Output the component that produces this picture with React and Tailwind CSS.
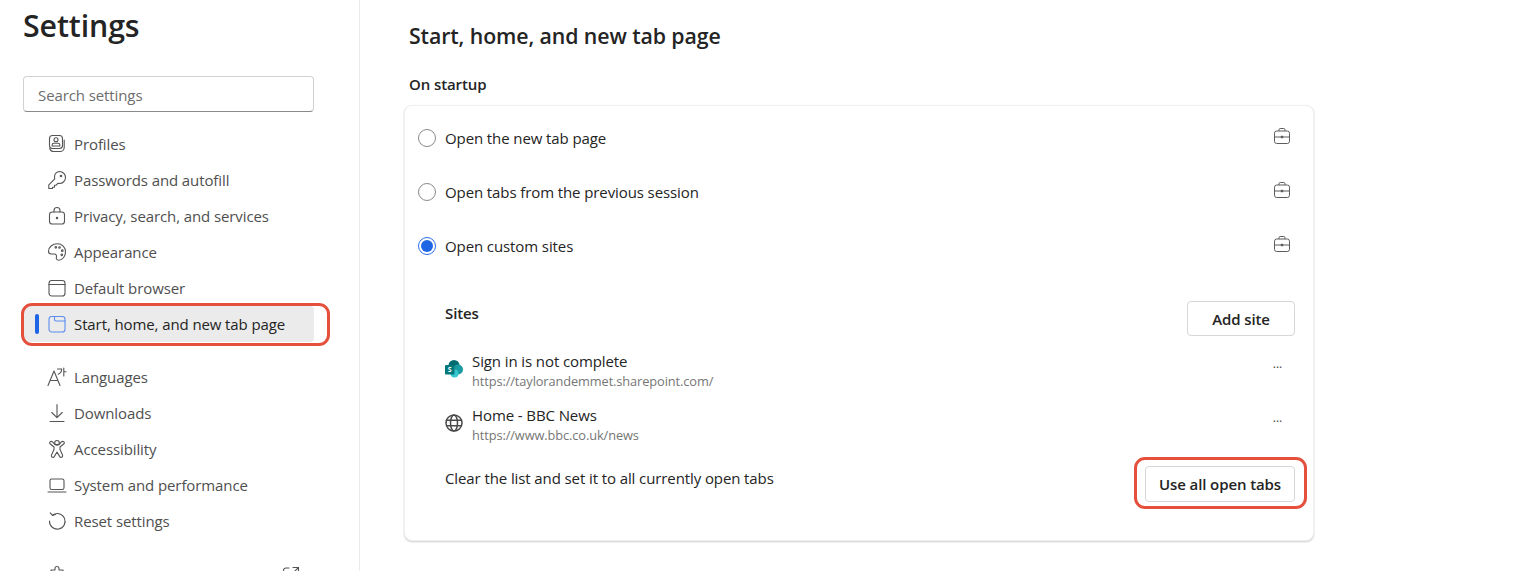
import React from 'react';

const Icon = ({ children, className = 'text-[#555555]' }) => (
  <svg viewBox="0 0 20 20" fill="none" stroke="currentColor" strokeWidth="1.1" strokeLinecap="round" strokeLinejoin="round" className={`h-5 w-5 shrink-0 ${className}`}>
    {children}
  </svg>
);

const icons = {
  profile: (
    <>
      <rect x="2.500" y="1.500" width="13" height="13" rx="3" />
      <path d="M2.800 14.500c.5 1.700 1.800 3 3.700 3h6.500c2.300 0 4.200-1.800 4.200-4.100V6" />
      <circle cx="9" cy="5.800" r="2" />
      <path d="M5.200 12v-1.200c0-1 .8-1.600 1.600-1.600h4.400c.8 0 1.600.6 1.600 1.600V12z" />
    </>
  ),
  key: (
    <>
      <path d="M12.500 1.500a6 6 0 0 1 0 12c-.6 0-1.100-.1-1.700-.2l-1.600 1.900H7.500v2H5.500v1.300H1.800v-3.600l6-6c-.2-.6-.3-1.100-.3-1.900a5.300 5.300 0 0 1 5-5.500z" />
      <circle cx="14" cy="6" r=".8" />
    </>
  ),
  lock: (
    <>
      <rect x="2.500" y="6" width="15" height="12" rx="2.800" />
      <path d="M7 6V4.500a3 3 0 0 1 6 0V6" />
      <circle cx="10" cy="12" r=".7" fill="currentColor" />
    </>
  ),
  palette: (
    <>
      <path d="M10.500 1.800c4.500 0 8 3.400 8 8 0 4.700-3.300 8.400-6.700 8.400-2.100 0-2.800-1.400-2.400-3 .4-1.700-.3-3.200-2.100-3.200H4.300C2.600 12 1.500 10.900 1.500 9.300c0-4.200 4-7.500 9-7.500z" />
      <circle cx="12.500" cy="5.500" r=".8" />
      <circle cx="15.300" cy="8.700" r=".8" />
      <circle cx="14.800" cy="12.800" r=".8" />
      <circle cx="8.800" cy="5.300" r=".8" />
    </>
  ),
  browser: (
    <>
      <rect x="2" y="2.500" width="16" height="15.500" rx="2.800" />
      <path d="M2 6.500h16" />
    </>
  ),
  tab: (
    <>
      <rect x="2" y="2.500" width="16" height="15.500" rx="2.800" />
      <path d="M7.500 2.500v3c0 1 .6 1.500 1.500 1.500h9" />
    </>
  ),
  download: <path d="M10 1.500v13M4.800 9.500l5.200 5.200 5.200-5.200M3 18.500h14" />,
  access: (
    <>
      <circle cx="10" cy="3.800" r="2.300" />
      <path d="M3.600 2.500c-1 .6-1.300 1.600-.5 2.300L7 8v2.500L4.500 16c-.4 1 .1 2 1 2.300.9.300 1.500-.1 1.900-.9L10 13l2.600 4.400c.4.800 1 1.200 1.900.9.900-.3 1.400-1.300 1-2.300L13 10.500V8l3.900-3.200c.8-.7.500-1.700-.5-2.300-.6-.3-1.200-.2-1.700.2L12 5.500H8L5.300 2.700c-.5-.4-1.100-.5-1.700-.2z" />
    </>
  ),
  laptop: (
    <>
      <rect x="3" y="4" width="14" height="10.500" rx="1.800" />
      <path d="M1 17h18" />
    </>
  ),
  reset: (
    <>
      <path d="M5.500 4.200A7.800 7.800 0 1 1 2.500 10" />
      <path d="M3.200 1.800l2.300 2.600 2.900-1" />
    </>
  ),
  extensions: <path d="M8 3.500a2 2 0 0 1 4 0V5h4v4h-1.500a2 2 0 0 0 0 4H16v4H4v-4h1.500a2 2 0 0 0 0-4H4V5h4z" />,
  external: (
    <>
      <path d="M8 3H5a2.500 2.500 0 0 0-2.500 2.500v9.500A2.500 2.500 0 0 0 5 17.500h9.500A2.500 2.500 0 0 0 17 15v-3" />
      <path d="M12 2.500h5.500V8M17.500 2.500L9.500 10.500" />
    </>
  ),
};

const Languages = () => (
  <Icon>
    <path d="M1 18.500L7 4 13 18.500M3 13.500h8" />
    <path d="M10.500 2h4.200c0 2.500-1.300 4.300-3.500 5.300M16.800 1v8M16.800 4.800h2.200" />
  </Icon>
);

const NavItem = ({ icon, label, trailing }) => (
  <div className="flex h-9 items-center gap-[7px] pl-[24px] pr-[13px] text-[#4f4f4f]">
    {icon}
    <span>{label}</span>
    {trailing && <span className="ml-auto">{trailing}</span>}
  </div>
);

const Radio = ({ checked }) =>
  checked ? (
    <span className="flex h-[18px] w-[18px] items-center justify-center rounded-full border border-[#2b6de8]">
      <span className="h-3 w-3 rounded-full bg-[#1f66e5]" />
    </span>
  ) : (
    <span className="h-[18px] w-[18px] rounded-full border border-[#8a8a8a]" />
  );

const Briefcase = () => (
  <svg viewBox="0 0 18 18" fill="none" stroke="currentColor" strokeWidth="1" className="mb-[5px] h-[18px] w-[18px] text-[#5c5c5c]">
    <rect x="1.500" y="4" width="15" height="12.500" rx="2.200" />
    <path d="M6 4V2.700C6 2 6.500 1.500 7.200 1.500h3.600c.7 0 1.200.5 1.200 1.200V4M1.500 10h15" />
    <rect x="7.800" y="8.800" width="2.400" height="2.400" fill="currentColor" stroke="none" />
  </svg>
);

const StartupRow = ({ label, checked }) => (
  <div className="flex h-[54px] items-center pl-[13px] pr-[22px]">
    <Radio checked={checked} />
    <span className="ml-[9px] flex-1 text-[#242424]">{label}</span>
    <Briefcase />
  </div>
);

const SharePoint = () => (
  <svg viewBox="0 0 18 18" className="h-[18px] w-[18px]">
    <circle cx="9" cy="5.500" r="5.500" fill="#036c70" />
    <circle cx="13" cy="9.500" r="5" fill="#1a9ba1" />
    <circle cx="9.500" cy="13.500" r="4" fill="#37c6d0" />
    <rect x="0" y="5" width="9.500" height="9.500" rx="1" fill="#03787c" />
    <text x="4.750" y="12.300" textAnchor="middle" fontSize="7" fontWeight="700" fill="#fff" fontFamily="Open Sans, sans-serif">S</text>
  </svg>
);

const Globe = () => (
  <svg viewBox="0 0 18 18" fill="none" stroke="#4a4a4a" strokeWidth="1.500" className="h-[18px] w-[18px]">
    <circle cx="9" cy="9" r="8" />
    <ellipse cx="9" cy="9" rx="3.500" ry="8" />
    <path d="M1.500 6.300h15M1.500 11.700h15" />
  </svg>
);

const SiteRow = ({ icon, name, url }) => (
  <div className="flex h-[54px] items-start">
    <div className="mt-[9px] w-[27px] shrink-0">{icon}</div>
    <div className="flex-1">
      <div className="h-[20px] leading-[20px] text-[#242424]">{name}</div>
      <div className="text-[12.800px] leading-[20px] text-[#767676]">{url}</div>
    </div>
    <span className="mr-[13px] mt-[3px] text-[12px] leading-[20px] text-[#424242]">...</span>
  </div>
);

const Button = ({ children, className = '' }) => (
  <button className={`flex items-center justify-center rounded border border-[#d6d6d6] bg-white font-semibold text-[#242424] ${className}`}>
    {children}
  </button>
);

export default function App() {
  return (
    <div className="flex h-[571px] overflow-hidden bg-white font-['Open_Sans',sans-serif] text-[15px] tracking-[-0.1px]">
      <aside className="w-[360px] shrink-0 border-r border-[#ebebeb] pl-[23px] pr-[45px]">
        <h1 className="mt-[6px] text-[30.300px] font-semibold leading-[40px] text-[#242424]">Settings</h1>
        <div className="mt-[30px] flex h-9 items-center rounded border border-[#d1d1d1] border-b-[#8a8a8a] px-[14px] pt-[2px] text-[#6e6e6e]">Search settings</div>
        <nav className="mt-[14px]">
          <NavItem icon={<Icon>{icons.profile}</Icon>} label="Profiles" />
          <NavItem icon={<Icon>{icons.key}</Icon>} label="Passwords and autofill" />
          <NavItem icon={<Icon>{icons.lock}</Icon>} label="Privacy, search, and services" />
          <NavItem icon={<Icon>{icons.palette}</Icon>} label="Appearance" />
          <NavItem icon={<Icon>{icons.browser}</Icon>} label="Default browser" />
          <div className="relative flex h-9 items-center gap-[7px] rounded-sm bg-[#ebebeb] pl-[24px] text-[#242424]">
            <span className="absolute left-[12px] top-[8px] h-5 w-[4px] rounded-full bg-[#1f66e5]" />
            <Icon className="text-[#5b8def]">{icons.tab}</Icon>
            <span>Start, home, and new tab page</span>
            <span className="absolute -left-[2px] -top-[3px] h-[43px] w-[309px] rounded-[11px] border-[3px] border-[#e5503c]" />
          </div>
          <div className="mt-[17px]">
            <NavItem icon={<Languages />} label="Languages" />
            <NavItem icon={<Icon>{icons.download}</Icon>} label="Downloads" />
            <NavItem icon={<Icon>{icons.access}</Icon>} label="Accessibility" />
            <NavItem icon={<Icon>{icons.laptop}</Icon>} label="System and performance" />
            <NavItem icon={<Icon>{icons.reset}</Icon>} label="Reset settings" />
          </div>
          <div className="mt-[18px]">
            <NavItem icon={<Icon>{icons.extensions}</Icon>} label="Extensions" trailing={<Icon>{icons.external}</Icon>} />
          </div>
        </nav>
      </aside>
      <main className="flex-1 pl-[44px]">
        <h2 className="ml-[5px] mt-[20px] text-[21.300px] font-semibold leading-[32px] text-[#242424]">Start, home, and new tab page</h2>
        <h3 className="ml-[5px] mt-[22px] font-semibold leading-[20px] text-[#242424]">On startup</h3>
        <section className="mt-[11px] h-[436px] w-[910px] rounded-lg border border-[#f0f0f0] bg-white pt-[5px] shadow-[0_1px_2px_rgba(0,0,0,0.2)]">
          <StartupRow label="Open the new tab page" />
          <StartupRow label="Open tabs from the previous session" />
          <StartupRow label="Open custom sites" checked />
          <div className="mt-[28px] pl-[40px] pr-[18px]">
            <div className="flex items-start justify-between">
              <span className="mt-[2px] font-semibold leading-[20px] text-[#242424]">Sites</span>
              <Button className="h-[35px] w-[108px] pt-[2px]">Add site</Button>
            </div>
            <div className="mt-[15px]">
              <SiteRow icon={<SharePoint />} name="Sign in is not complete" url="https://taylorandemmet.sharepoint.com/" />
              <SiteRow icon={<Globe />} name="Home - BBC News" url="https://www.bbc.co.uk/news" />
            </div>
            <div className="mt-[7px] flex items-start justify-between">
              <span className="mt-[2px] leading-[20px] text-[#242424]">Clear the list and set it to all currently open tabs</span>
              <div className="relative">
                <Button className="h-9 w-[150px] pt-[1px]">Use all open tabs</Button>
                <span className="absolute -left-[11px] -top-[9px] h-[52px] w-[173px] rounded-[11px] border-[3px] border-[#e5503c]" />
              </div>
            </div>
          </div>
        </section>
      </main>
    </div>
  );
}
